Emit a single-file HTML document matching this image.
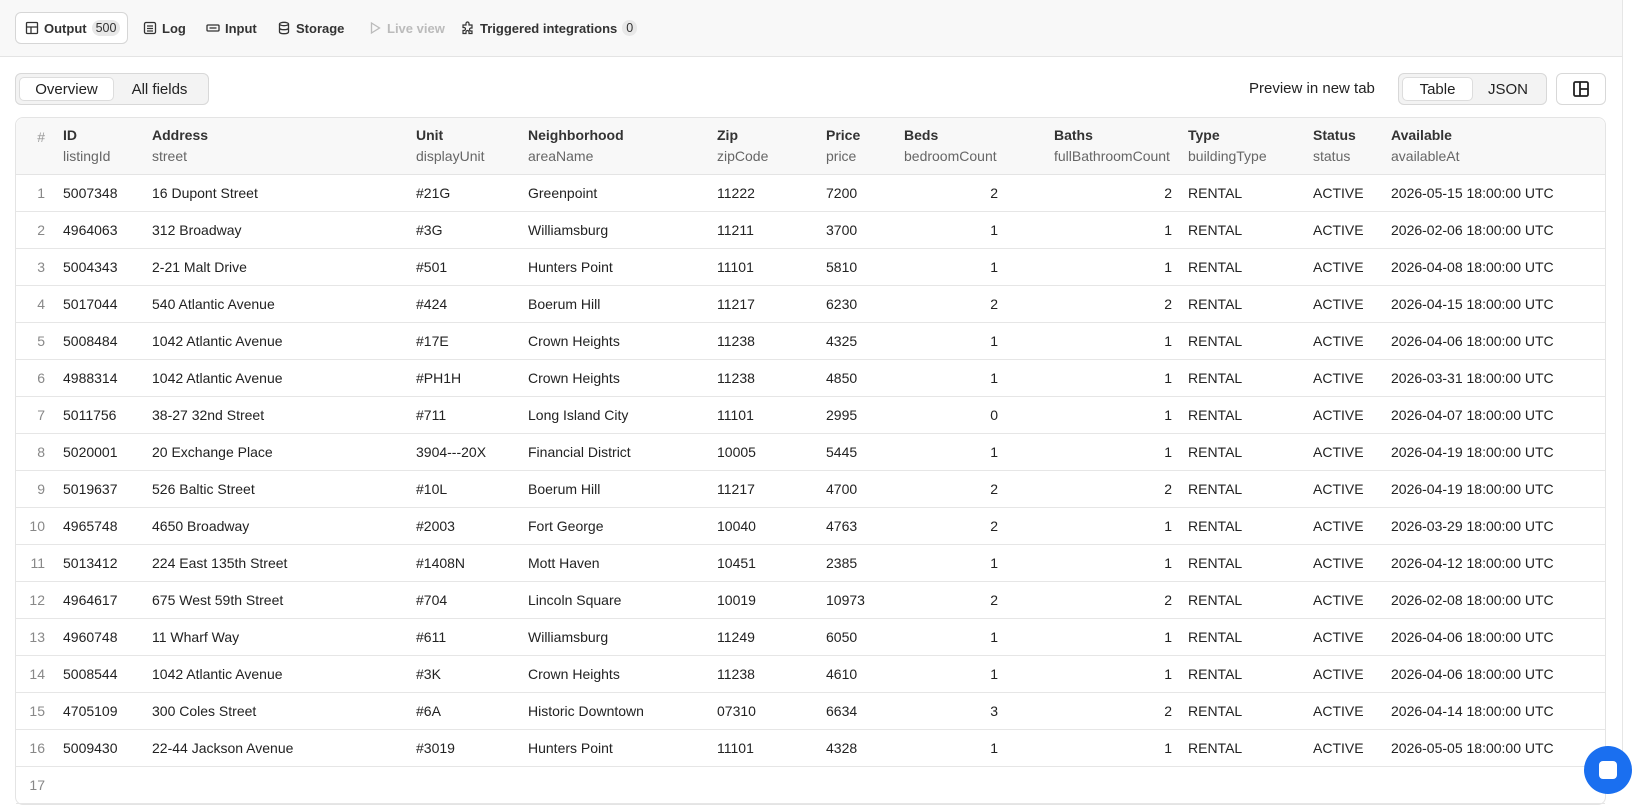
<!DOCTYPE html>
<html><head><meta charset="utf-8"><style>
*{box-sizing:border-box;margin:0;padding:0}
body{width:1644px;height:769px;overflow:hidden;background:#fff;font-family:"Liberation Sans",sans-serif;color:#222;font-size:14px;position:relative}
.main{position:absolute;left:0;top:0;width:1623px;height:769px;border-right:1px solid #e6e6e6}
.hdr{height:57px;background:#f8f8f8;border-bottom:1px solid #e4e4e4;position:relative}
.tab{position:absolute;top:12px;height:32px;display:flex;align-items:center;font-size:13px;font-weight:bold;color:#333;gap:5px}
.tab svg{width:14px;height:14px}
.t1{left:15px;width:113px;border:1px solid #d6d6d6;border-radius:6px;background:#fff;padding-left:9px}
.badge{background:#e8e8e8;border-radius:8px;padding:1px 4px;font-weight:normal;font-size:12.5px}
.seg{position:absolute;top:73px;height:32px;border:1px solid #d8d8d8;border-radius:6px;background:#f3f3f3;display:flex;padding:3px;font-size:15px}
.seg div{display:flex;align-items:center;justify-content:center}
.seg .on{background:#fff;border:1px solid #ddd;border-radius:5px}
table{position:absolute;left:15px;top:117px;width:1591px;border-collapse:separate;border-spacing:0;border:1px solid #e4e4e4;border-radius:8px;table-layout:fixed;font-size:14px}
th{background:#f8f8f8;text-align:left;font-weight:bold;height:57px;padding:0 8px;vertical-align:middle;border-bottom:1px solid #e4e4e4;line-height:21px;color:#333}
th span{display:block;font-weight:normal;color:#666}
th:first-child{border-top-left-radius:8px;text-align:right;color:#999;font-weight:normal;vertical-align:top;padding:9px 10px 0 0}
th:last-child{border-top-right-radius:8px}
td{height:37px;padding:0 8px;border-bottom:1px solid #e6e6e6;white-space:nowrap;color:#222}
td:first-child{text-align:right;color:#888;padding-right:10px}
td.b{text-align:right;padding-right:48px}
td.c{text-align:right;padding-right:8px}
</style></head><body>
<div class="main">
<div class="hdr">
<div class="tab t1"><svg viewBox="0 0 14 14" fill="none" stroke="#333" stroke-width="1.3"><rect x="1.5" y="1.5" width="11" height="11" rx="1"/><path d="M1.5 6h11M6 6v6.5"/></svg>Output <span class="badge">500</span></div>
<div class="tab" style="left:143px"><svg viewBox="0 0 14 14" fill="none" stroke="#333" stroke-width="1.3"><rect x="1.5" y="1.5" width="11" height="11" rx="1.5"/><path d="M4 5h6M4 7.5h6M4 10h6"/></svg>Log</div>
<div class="tab" style="left:206px"><svg viewBox="0 0 14 14" fill="none" stroke="#333" stroke-width="1.3"><rect x="1" y="4" width="12" height="6" rx="1"/><path d="M3.5 7h7"/></svg>Input</div>
<div class="tab" style="left:277px"><svg viewBox="0 0 14 14" fill="none" stroke="#333" stroke-width="1.3"><ellipse cx="7" cy="3" rx="4.5" ry="1.7"/><path d="M2.5 3v8c0 1 2 1.7 4.5 1.7s4.5-.7 4.5-1.7V3M2.5 7c0 1 2 1.7 4.5 1.7S11.5 8 11.5 7"/></svg>Storage</div>
<div class="tab" style="left:368px;color:#bbb"><svg viewBox="0 0 14 14" fill="none" stroke="#bbb" stroke-width="1.3"><path d="M3.5 2l8 5-8 5z"/></svg>Live view</div>
<div class="tab" style="left:461px"><svg viewBox="0 0 14 14" fill="none" stroke="#333" stroke-width="1.2"><path d="M5 2.5a1.5 1.5 0 013 0V4h3v3h-1a1.5 1.5 0 000 3h1v2.5H8V11a1.5 1.5 0 00-3 0v1.5H2V9.5h1a1.5 1.5 0 000-3H2V4h3z"/></svg>Triggered integrations <span class="badge">0</span></div>
</div>
<div class="seg" style="left:15px;width:194px"><div class="on" style="width:96px">Overview</div><div style="width:92px">All fields</div></div>
<div style="position:absolute;left:1249px;top:80px;font-size:15px">Preview in new tab</div>
<div class="seg" style="left:1398px;width:149px"><div class="on" style="width:72px">Table</div><div style="width:71px">JSON</div></div>
<div style="position:absolute;left:1556px;top:73px;width:50px;height:32px;border:1px solid #d8d8d8;border-radius:6px;display:flex;align-items:center;justify-content:center"><svg width="18" height="18" viewBox="0 0 18 18" fill="none" stroke="#222" stroke-width="1.8"><rect x="2" y="2" width="14" height="14" rx="1.5"/><path d="M8 2v14M8 9h8"/></svg></div>
<table>
<colgroup><col style="width:39px"><col style="width:89px"><col style="width:264px"><col style="width:112px"><col style="width:189px"><col style="width:109px"><col style="width:78px"><col style="width:150px"><col style="width:134px"><col style="width:125px"><col style="width:78px"><col></colgroup>
<tr><th>#</th><th>ID<span>listingId</span></th><th>Address<span>street</span></th><th>Unit<span>displayUnit</span></th><th>Neighborhood<span>areaName</span></th><th>Zip<span>zipCode</span></th><th>Price<span>price</span></th><th>Beds<span>bedroomCount</span></th><th>Baths<span>fullBathroomCount</span></th><th>Type<span>buildingType</span></th><th>Status<span>status</span></th><th>Available<span>availableAt</span></th></tr>
<tr><td>1</td><td>5007348</td><td>16 Dupont Street</td><td>#21G</td><td>Greenpoint</td><td>11222</td><td>7200</td><td class="b">2</td><td class="c">2</td><td>RENTAL</td><td>ACTIVE</td><td>2026-05-15 18:00:00 UTC</td></tr>
<tr><td>2</td><td>4964063</td><td>312 Broadway</td><td>#3G</td><td>Williamsburg</td><td>11211</td><td>3700</td><td class="b">1</td><td class="c">1</td><td>RENTAL</td><td>ACTIVE</td><td>2026-02-06 18:00:00 UTC</td></tr>
<tr><td>3</td><td>5004343</td><td>2-21 Malt Drive</td><td>#501</td><td>Hunters Point</td><td>11101</td><td>5810</td><td class="b">1</td><td class="c">1</td><td>RENTAL</td><td>ACTIVE</td><td>2026-04-08 18:00:00 UTC</td></tr>
<tr><td>4</td><td>5017044</td><td>540 Atlantic Avenue</td><td>#424</td><td>Boerum Hill</td><td>11217</td><td>6230</td><td class="b">2</td><td class="c">2</td><td>RENTAL</td><td>ACTIVE</td><td>2026-04-15 18:00:00 UTC</td></tr>
<tr><td>5</td><td>5008484</td><td>1042 Atlantic Avenue</td><td>#17E</td><td>Crown Heights</td><td>11238</td><td>4325</td><td class="b">1</td><td class="c">1</td><td>RENTAL</td><td>ACTIVE</td><td>2026-04-06 18:00:00 UTC</td></tr>
<tr><td>6</td><td>4988314</td><td>1042 Atlantic Avenue</td><td>#PH1H</td><td>Crown Heights</td><td>11238</td><td>4850</td><td class="b">1</td><td class="c">1</td><td>RENTAL</td><td>ACTIVE</td><td>2026-03-31 18:00:00 UTC</td></tr>
<tr><td>7</td><td>5011756</td><td>38-27 32nd Street</td><td>#711</td><td>Long Island City</td><td>11101</td><td>2995</td><td class="b">0</td><td class="c">1</td><td>RENTAL</td><td>ACTIVE</td><td>2026-04-07 18:00:00 UTC</td></tr>
<tr><td>8</td><td>5020001</td><td>20 Exchange Place</td><td>3904---20X</td><td>Financial District</td><td>10005</td><td>5445</td><td class="b">1</td><td class="c">1</td><td>RENTAL</td><td>ACTIVE</td><td>2026-04-19 18:00:00 UTC</td></tr>
<tr><td>9</td><td>5019637</td><td>526 Baltic Street</td><td>#10L</td><td>Boerum Hill</td><td>11217</td><td>4700</td><td class="b">2</td><td class="c">2</td><td>RENTAL</td><td>ACTIVE</td><td>2026-04-19 18:00:00 UTC</td></tr>
<tr><td>10</td><td>4965748</td><td>4650 Broadway</td><td>#2003</td><td>Fort George</td><td>10040</td><td>4763</td><td class="b">2</td><td class="c">1</td><td>RENTAL</td><td>ACTIVE</td><td>2026-03-29 18:00:00 UTC</td></tr>
<tr><td>11</td><td>5013412</td><td>224 East 135th Street</td><td>#1408N</td><td>Mott Haven</td><td>10451</td><td>2385</td><td class="b">1</td><td class="c">1</td><td>RENTAL</td><td>ACTIVE</td><td>2026-04-12 18:00:00 UTC</td></tr>
<tr><td>12</td><td>4964617</td><td>675 West 59th Street</td><td>#704</td><td>Lincoln Square</td><td>10019</td><td>10973</td><td class="b">2</td><td class="c">2</td><td>RENTAL</td><td>ACTIVE</td><td>2026-02-08 18:00:00 UTC</td></tr>
<tr><td>13</td><td>4960748</td><td>11 Wharf Way</td><td>#611</td><td>Williamsburg</td><td>11249</td><td>6050</td><td class="b">1</td><td class="c">1</td><td>RENTAL</td><td>ACTIVE</td><td>2026-04-06 18:00:00 UTC</td></tr>
<tr><td>14</td><td>5008544</td><td>1042 Atlantic Avenue</td><td>#3K</td><td>Crown Heights</td><td>11238</td><td>4610</td><td class="b">1</td><td class="c">1</td><td>RENTAL</td><td>ACTIVE</td><td>2026-04-06 18:00:00 UTC</td></tr>
<tr><td>15</td><td>4705109</td><td>300 Coles Street</td><td>#6A</td><td>Historic Downtown</td><td>07310</td><td>6634</td><td class="b">3</td><td class="c">2</td><td>RENTAL</td><td>ACTIVE</td><td>2026-04-14 18:00:00 UTC</td></tr>
<tr><td>16</td><td>5009430</td><td>22-44 Jackson Avenue</td><td>#3019</td><td>Hunters Point</td><td>11101</td><td>4328</td><td class="b">1</td><td class="c">1</td><td>RENTAL</td><td>ACTIVE</td><td>2026-05-05 18:00:00 UTC</td></tr>
<tr><td>17</td><td></td><td></td><td></td><td></td><td></td><td></td><td class="b"></td><td class="c"></td><td></td><td></td><td></td></tr>
</table>
</div>
<div style="position:absolute;left:1584px;top:746px;width:48px;height:48px;border-radius:50%;background:#1a6ff0"></div>
<div style="position:absolute;left:1599px;top:761px;width:18px;height:18px;border-radius:4px;background:#fff"></div>
</body></html>
